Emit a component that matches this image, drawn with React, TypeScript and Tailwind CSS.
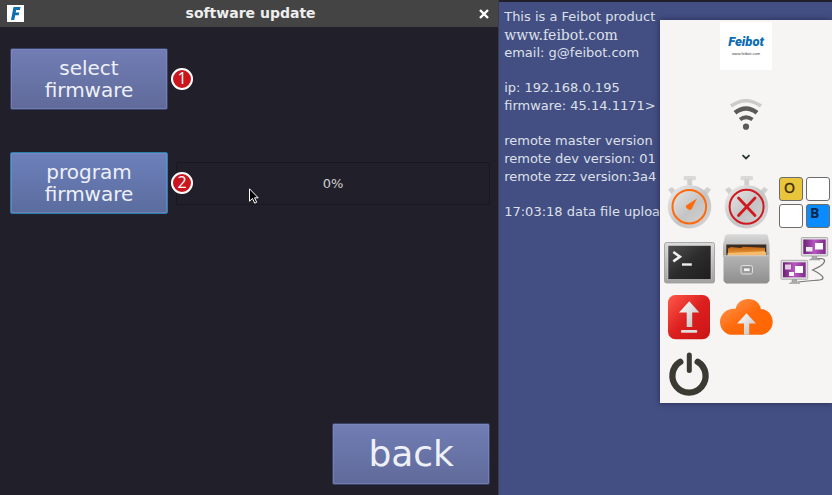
import type { ReactNode } from "react";
import clsx from "clsx";

const statusGroups = [
  ["This is a Feibot product", "www.feibot.com", "email: g@feibot.com"],
  ["ip: 192.168.0.195", "firmware: 45.14.1171>"],
  ["remote master version", "remote dev version: 01", "remote zzz version:3a4"],
  ["17:03:18 data file uploa"],
];

const buttonStyle =
  "rounded-xs border bg-linear-to-b text-[#eef0f8] inset-ring inset-ring-[#8790c0]/50 cursor-default";

function Gradients() {
  return (
    <svg className="absolute size-0" aria-hidden="true">
      <defs>
        <linearGradient id="silver" x1="0" y1="0" x2="1" y2="1">
          <stop offset="0" stopColor="#eeeeee" />
          <stop offset="0.55" stopColor="#c4c4c4" />
          <stop offset="1" stopColor="#d8d8d8" />
        </linearGradient>
        <linearGradient id="steel" x1="0" y1="0" x2="0" y2="1">
          <stop offset="0" stopColor="#dadada" />
          <stop offset="1" stopColor="#a2a2a2" />
        </linearGradient>
        <linearGradient id="drawer" x1="0" y1="0" x2="0" y2="1">
          <stop offset="0" stopColor="#b4b4b4" />
          <stop offset="1" stopColor="#8e8e8e" />
        </linearGradient>
        <linearGradient id="screen" x1="0" y1="0" x2="1" y2="1">
          <stop offset="0" stopColor="#505050" />
          <stop offset="0.5" stopColor="#2c2c2c" />
          <stop offset="1" stopColor="#1e1e1e" />
        </linearGradient>
        <linearGradient id="folder" x1="0" y1="0" x2="0" y2="1">
          <stop offset="0" stopColor="#c46412" />
          <stop offset="1" stopColor="#f2ad4e" />
        </linearGradient>
        <linearGradient id="purple" x1="0" y1="0" x2="1" y2="0">
          <stop offset="0" stopColor="#6b2274" />
          <stop offset="0.5" stopColor="#b856c2" />
          <stop offset="1" stopColor="#7e2b88" />
        </linearGradient>
        <linearGradient id="red" x1="0" y1="0" x2="1" y2="1">
          <stop offset="0" stopColor="#ff5a48" />
          <stop offset="0.5" stopColor="#dc1f1f" />
          <stop offset="1" stopColor="#cc1414" />
        </linearGradient>
        <linearGradient id="cloud" x1="0" y1="0" x2="1" y2="1">
          <stop offset="0" stopColor="#ff9d5c" />
          <stop offset="0.5" stopColor="#ff6a0a" />
          <stop offset="1" stopColor="#ff6600" />
        </linearGradient>
        <linearGradient id="arrow" x1="0" y1="0" x2="1" y2="1">
          <stop offset="0" stopColor="#ffffff" />
          <stop offset="1" stopColor="#bdbdbd" />
        </linearGradient>
      </defs>
    </svg>
  );
}

function StopwatchBody() {
  return (
    <g fill="url(#silver)">
      <rect x="23.5" y="1" width="12.5" height="4.2" rx="1.5" fill="#d9d9d9" />
      <rect x="27.3" y="4" width="4.8" height="7" fill="#cfcfcf" />
      <path d="M8 14.5l4-2.5 5 5-4 4zM51 14.5l-4-2.5-5 5 4 4z" fill="#d0d0d0" />
      <circle cx="29.5" cy="31.7" r="21.8" />
    </g>
  );
}

function StartIcon() {
  return (
    <>
      <StopwatchBody />
      <circle cx="29.3" cy="31.7" r="16.8" fill="none" stroke="#ff6a0c" strokeWidth="2" />
      <path d="M37 23.6L26.2 30.6Q25 32 27 33.6Q29.5 36 31.5 34.2z" fill="#ff6a0c" />
    </>
  );
}

function StopIcon() {
  return (
    <>
      <StopwatchBody />
      <circle cx="29.6" cy="31.7" r="17" fill="none" stroke="#cf1a20" strokeWidth="2" />
      <path d="M21.5 23l16.5 17.5M38 23L21.5 40.5" stroke="#cf1a20" strokeWidth="2.8" strokeLinecap="round" />
    </>
  );
}

function TilesIcon() {
  return (
    <>
      <g stroke="#6c6c6c" strokeWidth="1">
        <rect x="4.5" y="2.5" width="23" height="23" rx="2.5" fill="#e9c53c" />
        <rect x="31.5" y="2.5" width="23" height="23" rx="2.5" fill="#fff" />
        <rect x="4.5" y="29.5" width="23" height="23" rx="2.5" fill="#fff" />
        <rect x="31.5" y="29.5" width="23" height="23" rx="2.5" fill="#0a8bff" />
      </g>
      <text x="9" y="18" fontSize="14" fill="#3c310d" stroke="#3c310d" strokeWidth="0.3" fontFamily="DejaVu Sans, sans-serif">O</text>
      <text x="35" y="43" fontSize="14" fontWeight="700" fill="#06284a" fontFamily="Open Sans, sans-serif">B</text>
    </>
  );
}

function TerminalIcon() {
  return (
    <>
      <rect x="4.5" y="10.5" width="50" height="40.5" rx="2" fill="url(#steel)" stroke="#9a9a9a" strokeWidth="0.8" />
      <rect x="8" y="13.5" width="43" height="34" fill="url(#screen)" stroke="#e4e4e4" strokeWidth="0.5" />
      <path d="M13.3 20l6.6 4.7-6.6 4.7" fill="none" stroke="#f0f0f0" strokeWidth="2.6" />
      <path d="M22 32.5h9.8" stroke="#f0f0f0" strokeWidth="2.4" />
    </>
  );
}

function CabinetIcon() {
  return (
    <>
      <path d="M11 2.3h37.5q2 0 2.5 1.5l1.5 9.2v12h-46.5v-12l2-9q.6-1.7 3-1.7z" fill="url(#steel)" />
      <rect x="9.3" y="12.5" width="40" height="13" fill="#3a2c22" />
      <path d="M11 16.5l3-1.5 10 1 2-1.2 22 1v9h-37z" fill="url(#folder)" />
      <path d="M10.5 21l37-1.8 1.5 1.2v4h-38.5z" fill="#f5bb6b" />
      <path d="M6.5 23.5h46v25.5l-2.5 2.5h-41l-2.5-2.5z" fill="url(#drawer)" />
      <path d="M6.5 23.8h46" stroke="#d4d4d4" strokeWidth="0.8" />
      <rect x="24" y="33.5" width="11.5" height="8.5" rx="1.8" fill="#9d9d9d" stroke="#e0e0e0" strokeWidth="1" />
      <rect x="26.5" y="36" width="6.5" height="3.6" fill="#f2f2f2" stroke="#707070" strokeWidth="0.5" />
    </>
  );
}

function NetworkIcon() {
  return (
    <>
      <path
        d="M41 27c5-.5 9-1 8.500 2.500-1 3.500-6 6-12 8.500 4 2 9 4 10.500 7.500.5 4-9 2-25 4.500"
        fill="none"
        stroke="#777"
        strokeWidth="1.2"
      />
      <path d="M37 23.5h5v3l3 1.5h-11l3-1.5z" fill="#aaa" stroke="#888" strokeWidth="0.4" />
      <rect x="26.3" y="5.5" width="26.4" height="18.5" rx="1" fill="#dedede" stroke="#999" strokeWidth="0.7" />
      <rect x="28.3" y="7.5" width="22.4" height="14.5" fill="url(#purple)" />
      <rect x="31" y="15" width="6.5" height="4.5" fill="#eee" />
      <rect x="40" y="11" width="8" height="6.5" fill="#fff" />
      <path d="M17 47h5v3l3 1.5h-11l3-1.5z" fill="#aaa" stroke="#888" strokeWidth="0.4" />
      <rect x="6" y="28.3" width="26.7" height="19" rx="1" fill="#dedede" stroke="#999" strokeWidth="0.7" />
      <rect x="8" y="30.3" width="22.7" height="15" fill="url(#purple)" />
      <rect x="10" y="32.5" width="6" height="5" fill="#e3cbe6" />
      <rect x="20" y="34" width="8" height="7" fill="#fff" />
      <rect x="14" y="40" width="5" height="4" fill="#f4f4f4" />
    </>
  );
}

function UpdateIcon() {
  return (
    <>
      <rect x="8" y="6" width="42" height="44.3" rx="7.5" fill="url(#red)" />
      <path d="M29.3 12.3L39.3 23.5H32.2V38H26.7V23.5H19z" fill="url(#arrow)" />
      <rect x="21" y="41" width="16.2" height="2.8" rx="0.8" fill="#e2dddd" />
    </>
  );
}

function CloudIcon() {
  return (
    <>
      <path
        d="M15.5 45.8C8.5 45.8 3 40 3 32.9 3 25.5 9.5 19 18.5 19.8 20 13.7 25 10 31.3 10 38 10 43 14 43.8 20 50.5 20.3 55.7 26 55.7 33 55.7 40 50 45.8 43 45.8z"
        fill="url(#cloud)"
      />
      <path d="M29.5 24.3L39 34.5H32.2V45.8H27V34.5H20z" fill="url(#arrow)" />
    </>
  );
}

function PowerIcon() {
  return (
    <g fill="none" stroke="#3b3a33" strokeLinecap="round">
      <path d="M20.3 15.8a16.6 16.6 0 1 0 17.4 0" strokeWidth="6.3" />
      <path d="M29.3 9v15.5" strokeWidth="5" />
    </g>
  );
}

function WifiIcon() {
  return (
    <svg viewBox="0 0 32 32" className="size-8" fill="none" role="img" aria-label="Wi-Fi signal">
      <path d="M1 8q15-10.5 30 0" stroke="#cbcbcb" strokeWidth="3.6" />
      <path d="M5 14.8q11-8.6 22 0" stroke="#5a5a5a" strokeWidth="4.6" />
      <path d="M10 21.5q6-4.5 12.5 0" stroke="#5a5a5a" strokeWidth="3.8" />
      <circle cx="16" cy="28.7" r="3.1" fill="#5a5a5a" />
    </svg>
  );
}

const launchers: { label: string; icon: ReactNode; newRow?: boolean }[] = [
  { label: "Start timing", icon: <StartIcon /> },
  { label: "Stop timing", icon: <StopIcon /> },
  { label: "Tiles", icon: <TilesIcon /> },
  { label: "Terminal", icon: <TerminalIcon /> },
  { label: "Files", icon: <CabinetIcon /> },
  { label: "Network", icon: <NetworkIcon /> },
  { label: "Update", icon: <UpdateIcon /> },
  { label: "Cloud upload", icon: <CloudIcon /> },
  { label: "Power", icon: <PowerIcon />, newRow: true },
];

function StepBadge({ step }: { step: number }) {
  return (
    <span className="absolute left-full top-1/2 z-10 ml-[3px] flex size-[22px] -translate-y-1/2 items-center justify-center rounded-full border-2 border-white bg-[#cb151c] pb-[2px] font-['Open_Sans',sans-serif] text-[16px] leading-none text-white">
      {step}
    </span>
  );
}

function FirmwareButton({ label, step, focused }: { label: string; step: number; focused?: boolean }) {
  return (
    <div className="relative shrink-0">
      <button
        className={clsx(
          buttonStyle,
          "h-[62px] w-[158px] px-6 text-[20px] leading-[22px]",
          focused
            ? "border-[#2580b0] from-[#6c80bb] to-[#5b6c9e]"
            : "border-[#39426b] from-[#717db4] to-[#606a9a]",
        )}
      >
        {label}
      </button>
      <StepBadge step={step} />
    </div>
  );
}

function UpdateDialog() {
  return (
    <main className="relative flex w-3/5 flex-col border-r border-[#3c3c44] bg-[#211f29]">
      <header className="flex h-[27px] items-center justify-between bg-[#444444] px-[7px] text-white">
        <span className="flex size-[17px] items-center justify-center bg-white">
          <svg viewBox="0 0 17 17" className="size-[17px]" aria-hidden="true">
            <path d="M6.5 2h7l-.6 3h-3.7l-.5 2.5h3.6l-.6 2.7h-3.5L7.2 15H4z" fill="#0f6fb0" />
          </svg>
        </span>
        <h1 className="text-[14px] font-bold text-[#eeeeee]">software update</h1>
        <button aria-label="Close" className="flex size-[14px] items-center justify-center">
          <svg viewBox="0 0 10 10" className="size-[10px]" aria-hidden="true">
            <path d="M1 1l8 8M9 1L1 9" stroke="#fff" strokeWidth="2.4" />
          </svg>
        </button>
      </header>

      <div className="flex flex-1 flex-col gap-[42px] pb-[10px] pl-[10px] pr-2 pt-[21px]">
        <div className="flex">
          <FirmwareButton label="select firmware" step={1} />
        </div>
        <div className="flex items-center gap-2">
          <FirmwareButton label="program firmware" step={2} focused />
          <div
            role="progressbar"
            aria-label="Programming progress"
            aria-valuenow={0}
            className="relative flex h-[43px] flex-1 items-center justify-center rounded-xs border border-[#191720] pt-[2px] text-[13px] text-[#d0d0d0]"
          >
            0%
            <svg viewBox="0 0 11 17" className="absolute left-[72px] top-[25px] h-[17px] w-[11px]" aria-hidden="true">
              <path d="M.5 .8v12.4l3-2.7 2.2 4.7 2-1-2.2-4.4h3.7z" fill="#000" stroke="#fff" strokeWidth="1" />
            </svg>
          </div>
        </div>
        <button
          className={clsx(
            buttonStyle,
            "mt-auto h-[62px] w-[158px] self-end border-[#39426b] from-[#717db4] to-[#606a9a] text-[36px] leading-none",
          )}
        >
          back
        </button>
      </div>
    </main>
  );
}

function Dock() {
  return (
    <nav className="absolute right-0 top-5 flex w-[172px] flex-col items-center bg-[#f6f5f3] pt-[2px] shadow-[0_0_6px_rgba(20,20,50,0.6)]">
      <div className="flex h-12 w-[52px] flex-col items-center bg-white pt-[13px]">
        <span className="font-[Roboto,sans-serif] text-[13px] font-black italic leading-[14px] text-[#0b6cb4]">
          Feibot
        </span>
        <span className="pt-[2px] font-['Liberation_Sans',sans-serif] text-[4px] leading-[5px] text-[#444]">
          www.feibot.com
        </span>
      </div>
      <div className="pt-7">
        <WifiIcon />
      </div>
      <button aria-label="Collapse" className="flex h-[45px] items-center pt-[8px]">
        <svg viewBox="0 0 10 6" className="h-[6px] w-[10px]" fill="none" aria-hidden="true">
          <path d="M1.5 1.2L5 4.5l3.5-3.3" stroke="#2b3437" strokeWidth="1.8" />
        </svg>
      </button>
      <div className="grid w-full grid-cols-3">
        {launchers.map((item) => (
          <button
            key={item.label}
            aria-label={item.label}
            className={clsx("h-[57px]", item.newRow && "col-start-1")}
          >
            <svg viewBox="0 0 57 57" className="size-[57px]" aria-hidden="true">
              {item.icon}
            </svg>
          </button>
        ))}
      </div>
    </nav>
  );
}

export default function App() {
  return (
    <div className="relative flex min-h-screen overflow-hidden bg-[#434e82] font-['DejaVu_Sans',sans-serif]">
      <Gradients />
      <UpdateDialog />
      <section className="flex flex-1 flex-col gap-[17px] overflow-hidden border-t-2 border-[#211f29] pl-[5px] pt-[6px] text-[13px] leading-[18px] text-[#dde0ea]">
        {statusGroups.map((lines) => (
          <div key={lines[0]}>
            {lines.map((line) => (
              <p
                key={line}
                className={clsx(
                  "whitespace-nowrap",
                  line.startsWith("www") && "font-['DejaVu_Serif',serif] text-[14px]",
                )}
              >
                {line}
              </p>
            ))}
          </div>
        ))}
      </section>
      <Dock />
    </div>
  );
}
